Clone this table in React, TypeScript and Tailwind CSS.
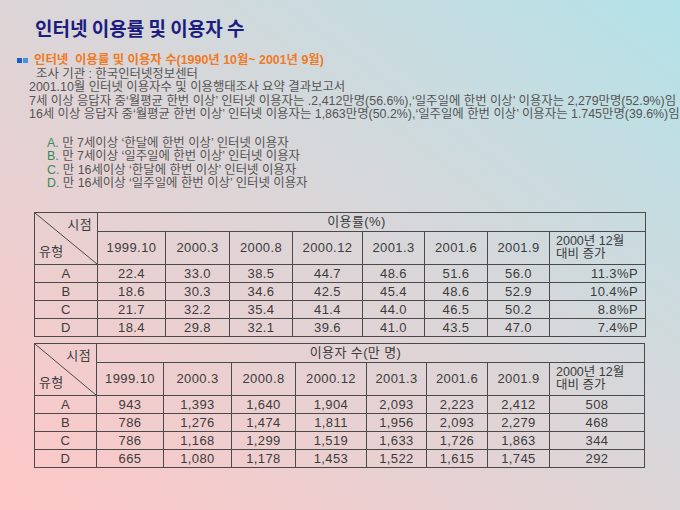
import React from "react";

type Row = { k: string; v: string[]; last: string };

const t1Rows: Row[] = [
  { k: "A", v: ["22.4", "33.0", "38.5", "44.7", "48.6", "51.6", "56.0"], last: "11.3%P" },
  { k: "B", v: ["18.6", "30.3", "34.6", "42.5", "45.4", "48.6", "52.9"], last: "10.4%P" },
  { k: "C", v: ["21.7", "32.2", "35.4", "41.4", "44.0", "46.5", "50.2"], last: "8.8%P" },
  { k: "D", v: ["18.4", "29.8", "32.1", "39.6", "41.0", "43.5", "47.0"], last: "7.4%P" },
];

const t2Rows: Row[] = [
  { k: "A", v: ["943", "1,393", "1,640", "1,904", "2,093", "2,223", "2,412"], last: "508" },
  { k: "B", v: ["786", "1,276", "1,474", "1,811", "1,956", "2,093", "2,279"], last: "468" },
  { k: "C", v: ["786", "1,168", "1,299", "1,519", "1,633", "1,726", "1,863"], last: "344" },
  { k: "D", v: ["665", "1,080", "1,178", "1,453", "1,522", "1,615", "1,745"], last: "292" },
];

const years = ["1999.10", "2000.3", "2000.8", "2000.12", "2001.3", "2001.6", "2001.9"];

function DataTable({
  title,
  widths,
  rows,
  lastRight,
}: {
  title: string;
  widths: number[];
  rows: Row[];
  lastRight: boolean;
}) {
  const cell = "border border-[#4a4a4a] p-0";
  return (
    <table
      className="table-fixed border-collapse text-[13px] leading-none tracking-[0.4px] text-[#3c3c3c]"
      style={{ width: widths.reduce((a, b) => a + b, 0) }}
    >
      <colgroup>
        {widths.map((w, i) => (
          <col key={i} style={{ width: w }} />
        ))}
      </colgroup>
      <tbody>
        <tr className="h-[19px]">
          <td rowSpan={2} className={`${cell} relative align-top`}>
            <svg className="absolute inset-0 h-full w-full" preserveAspectRatio="none" viewBox="0 0 100 100">
              <line x1="0" y1="0" x2="100" y2="100" stroke="#4a4a4a" strokeWidth="1" vectorEffect="non-scaling-stroke" />
            </svg>
            <div className="flex h-[51px] flex-col justify-between pb-[6px] pl-[4px] pr-[5px] pt-[5px]">
              <span className="self-end">시점</span>
              <span className="self-start">유형</span>
            </div>
          </td>
          <td colSpan={8} className={`${cell} pr-[30px] text-center`}>
            {title}
          </td>
        </tr>
        <tr className="h-[33px]">
          {years.map((y) => (
            <td key={y} className={`${cell} text-center`}>
              {y}
            </td>
          ))}
          <td className={`${cell} whitespace-nowrap pl-[6px] text-left text-[12.5px] leading-[13px] tracking-normal`}>
            <div>2000년 12월</div>
            <div>대비 증가</div>
          </td>
        </tr>
        {rows.map((r) => (
          <tr key={r.k} className="h-[18px]">
            <td className={`${cell} text-center`}>{r.k}</td>
            {r.v.map((v, i) => (
              <td key={i} className={`${cell} text-center`}>
                {v}
              </td>
            ))}
            <td className={`${cell} ${lastRight ? "pr-[7px] text-right" : "text-center"}`}>{r.last}</td>
          </tr>
        ))}
      </tbody>
    </table>
  );
}

export default function App() {
  return (
    <div
      className="relative h-[510px] w-[680px] overflow-hidden bg-linear-to-tr from-[#ffc6c6] to-[#b2e2e8]"
      style={{ fontFamily: '"Liberation Sans", "Noto Sans CJK KR", sans-serif' }}
    >
      <div className="pl-[35px] pt-[14px]">
        <h1
          className="text-[19px] font-semibold leading-[28px] text-[#1c1c80]"
          style={{ fontFamily: '"Noto Sans CJK KR", sans-serif' }}
        >
          인터넷 이용률 및 이용자 수
        </h1>
      </div>

      <div className="mt-[12px] text-[12.4px] leading-[13.5px] text-[#555]">
        <div className="flex items-center pl-[17px]">
          <span className="mr-[1px] inline-block h-[5px] w-[5px] bg-[#1f5fc0]" />
          <span className="mr-[6px] inline-block h-[5px] w-[5px] bg-[#4a90e0]" />
          <span className="whitespace-pre font-semibold text-[#ef7a24]">인터넷  이용률 및 이용자 수(1990년 10월~ 2001년 9월)</span>
        </div>
        <div className="pl-[36px]">조사 기관 : 한국인터넷정보센터</div>
        <div className="whitespace-nowrap pl-[29px]">
          <div>2001.10월 인터넷 이용자수 및 이용행태조사 요약 결과보고서</div>
          <div>
            7세 이상 응답자 중‘월평균 한번 이상’ 인터넷 이용자는 .2,412만명(56.6%),‘일주일에 한번 이상’ 이용자는 2,279만명(52.9%)임
          </div>
          <div>
            16세 이상 응답자 중‘월평균 한번 이상’ 인터넷 이용자는 1,863만명(50.2%),‘일주일에 한번 이상’ 이용자는 1.745만명(39.6%)임
          </div>
        </div>

        <div className="mt-[15px] pl-[47px]">
          <div>
            <span className="text-[#3a8a5c]">A.</span> 만 7세이상 ‘한달에 한번 이상’ 인터넷 이용자
          </div>
          <div>
            <span className="text-[#3a8a5c]">B.</span> 만 7세이상 ‘일주일에 한번 이상’ 인터넷 이용자
          </div>
          <div>
            <span className="text-[#3a8a5c]">C.</span> 만 16세이상 ‘한달에 한번 이상’ 인터넷 이용자
          </div>
          <div>
            <span className="text-[#3a8a5c]">D.</span> 만 16세이상 ‘일주일에 한번 이상’ 인터넷 이용자
          </div>
        </div>
      </div>

      <div className="mt-[21px] flex flex-col gap-[6px] pl-[34px]">
        <DataTable title="이용률(%)" widths={[63, 68, 64, 63, 70, 62, 63, 62, 96]} rows={t1Rows} lastRight />
        <DataTable title="이용자 수(만 명)" widths={[62, 67, 68, 64, 71, 60, 61, 62, 95]} rows={t2Rows} lastRight={false} />
      </div>
    </div>
  );
}
